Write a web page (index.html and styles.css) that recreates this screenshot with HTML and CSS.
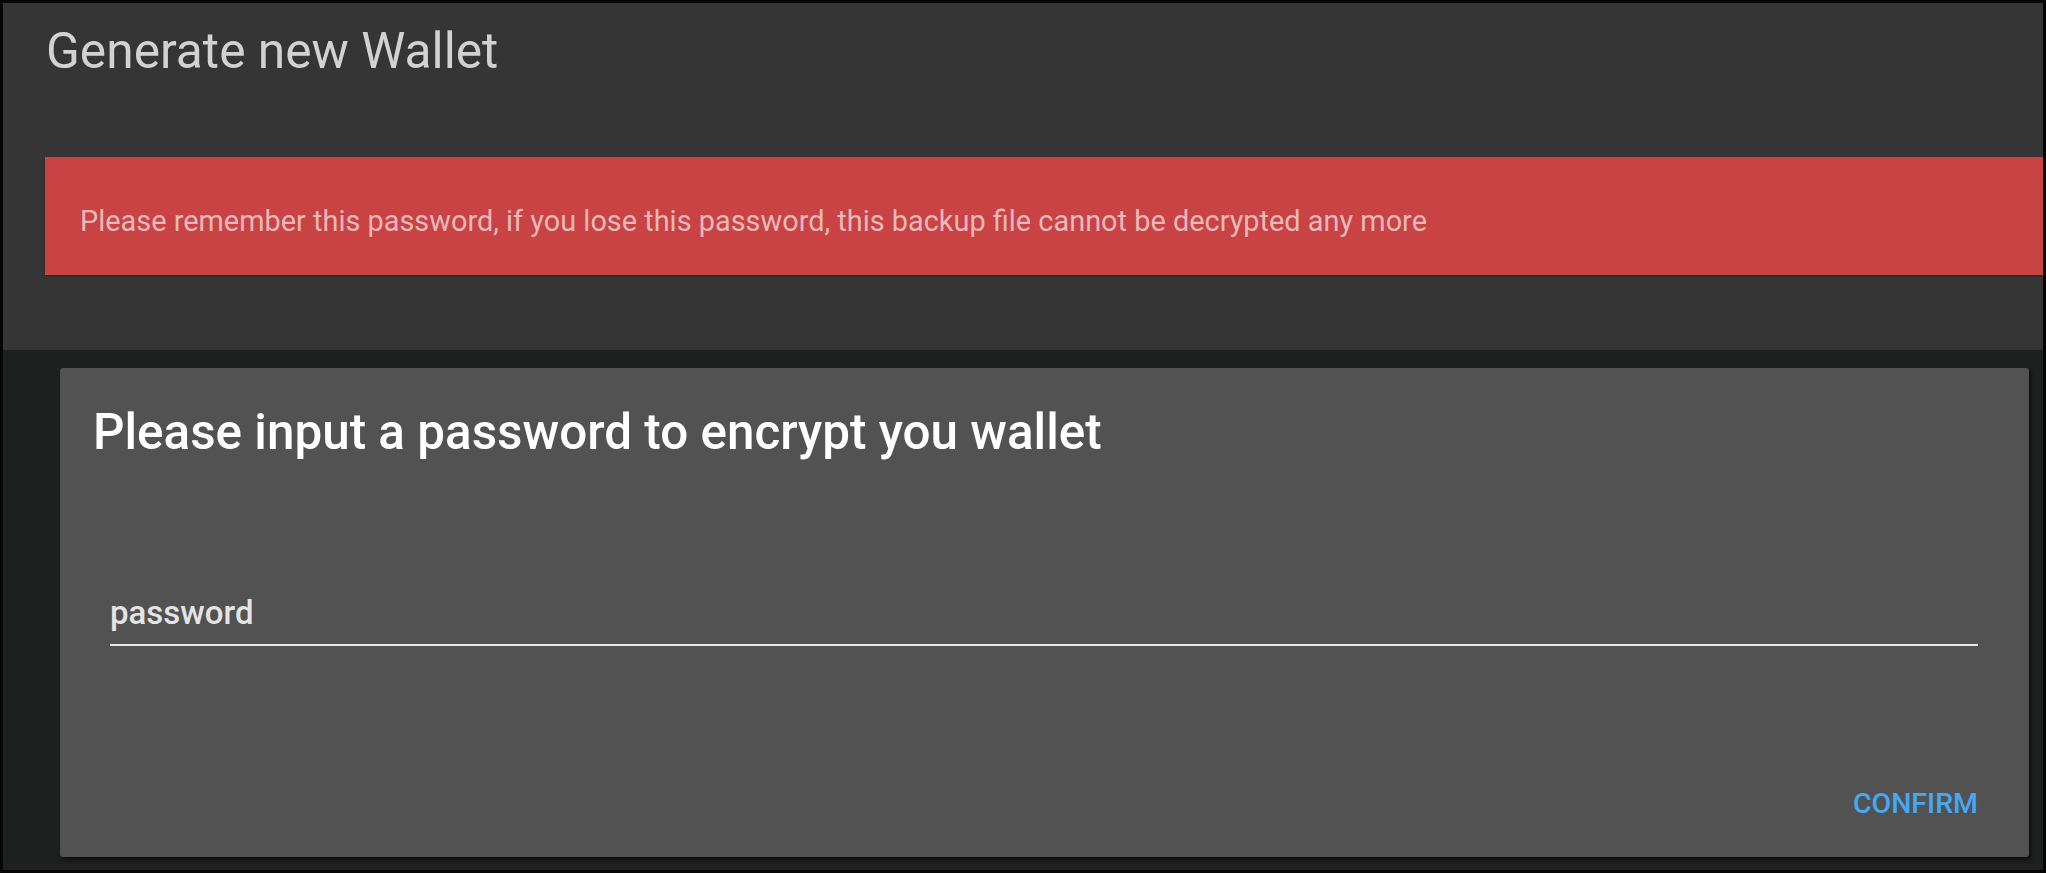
FILE: index.html
```html
<!DOCTYPE html>
<html lang="en">
<head>
<meta charset="utf-8">
<title>Generate new Wallet</title>
<link rel="stylesheet" href="styles.css">
</head>
<body>
<div class="app">
  <header class="header">
    <h1 class="page-title">Generate new Wallet</h1>
    <div class="alert">Please remember this password, if you lose this password, this backup file cannot be decrypted any more</div>
  </header>
  <main class="main">
    <section class="card">
      <h2 class="card-title">Please input a password to encrypt you wallet</h2>
      <div class="field">
        <label class="field-label" for="pw">password</label>
        <div class="field-line"></div>
      </div>
      <div class="actions">
        <button class="btn-confirm" type="button">CONFIRM</button>
      </div>
    </section>
  </main>
</div>
</body>
</html>
```

FILE: styles.css
```css
html, body {
  margin: 0;
  padding: 0;
  background: #050505;
}

body {
  font-family: Roboto, "Liberation Sans", Arial, sans-serif;
  width: 2046px;
  height: 873px;
  overflow: hidden;
}

.app {
  margin: 3px;
  height: 867px;
  display: flex;
  flex-direction: column;
  background: #1e1f1f;
}

.header {
  background: #353535;
  height: 347px;
  display: flex;
  flex-direction: column;
  flex: none;
}

.page-title {
  margin: 0;
  padding: 18px 0 0 43px;
  height: 134px;
  box-sizing: border-box;
  font-weight: 400;
  font-size: 49.7px;
  line-height: 60px;
  color: #d2d2d2;
}

.alert {
  margin-left: 42px;
  margin-top: 20px;
  height: 118px;
  background: #c94244;
  color: #e9b9b9;
  font-size: 28.9px;
  display: flex;
  align-items: center;
  padding-left: 35px;
  padding-top: 10px;
  box-sizing: border-box;
  box-shadow: 0 1px 2px rgba(0,0,0,0.3);
}

.main {
  flex: 1;
  padding: 18px 14px 0 57px;
}

.card {
  background: #525252;
  height: 489px;
  border-radius: 3px;
  box-shadow: 2px 3px 4px rgba(0,0,0,0.6);
  display: flex;
  flex-direction: column;
  padding: 0 51px 0 33px;
  box-sizing: border-box;
}

.card-title {
  margin: 0;
  padding-top: 33px;
  font-size: 49.4px;
  line-height: 62px;
  font-weight: 500;
  color: #ffffff;
}

.field {
  margin-top: 132px;
  margin-left: 17px;
}

.field-label {
  display: block;
  font-size: 33px;
  font-weight: 500;
  color: #e4e4e4;
  line-height: 36px;
}

.field-line {
  margin-top: 13px;
  height: 2px;
  background: #e8e8e8;
}

.actions {
  margin-top: auto;
  margin-bottom: 37px;
  display: flex;
  justify-content: flex-end;
}

.btn-confirm {
  background: none;
  border: none;
  padding: 0;
  font-family: Roboto, "Liberation Sans", Arial, sans-serif;
  font-size: 28.5px;
  font-weight: 500;
  color: #45a8f4;
  line-height: 32px;
}
```
